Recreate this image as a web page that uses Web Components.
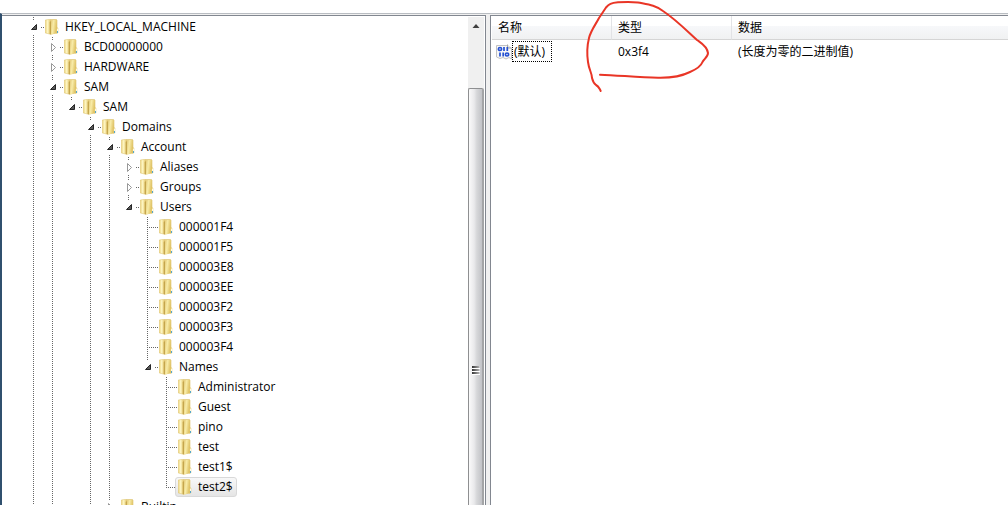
<!DOCTYPE html>
<html lang="zh-CN">
<head>
<meta charset="utf-8">
<title>注册表编辑器</title>
<style>
  html, body { height: 100%; margin: 0; background: #fff; }
  body { font: 12px/20px "Open Sans", "Noto Sans CJK SC", sans-serif; color: #000; overflow: hidden; }
</style>
</head>
<body>
<registry-window>
  <key-tree slot="tree">
    <key-node label="HKEY_LOCAL_MACHINE" state="open">
      <key-node label="BCD00000000" state="closed"></key-node>
      <key-node label="HARDWARE" state="closed"></key-node>
      <key-node label="SAM" state="open">
        <key-node label="SAM" state="open" last>
          <key-node label="Domains" state="open">
            <key-node label="Account" state="open">
              <key-node label="Aliases" state="closed"></key-node>
              <key-node label="Groups" state="closed"></key-node>
              <key-node label="Users" state="open" last>
                <key-node label="000001F4"></key-node>
                <key-node label="000001F5"></key-node>
                <key-node label="000003E8"></key-node>
                <key-node label="000003EE"></key-node>
                <key-node label="000003F2"></key-node>
                <key-node label="000003F3"></key-node>
                <key-node label="000003F4"></key-node>
                <key-node label="Names" state="open" last>
                  <key-node label="Administrator"></key-node>
                  <key-node label="Guest"></key-node>
                  <key-node label="pino"></key-node>
                  <key-node label="test"></key-node>
                  <key-node label="test1$"></key-node>
                  <key-node label="test2$" selected last></key-node>
                </key-node>
              </key-node>
            </key-node>
            <key-node label="Builtin" state="closed" last></key-node>
          </key-node>
        </key-node>
      </key-node>
    </key-node>
  </key-tree>
  <value-list slot="values"></value-list>
  <ink-mark slot="ink"></ink-mark>
</registry-window>

<script>
class ShadowElement extends HTMLElement {
  constructor() {
    super();
    this.attachShadow({ mode: "open" }).innerHTML = this.constructor.markup;
  }
}

customElements.define("registry-window", class extends ShadowElement {
  static markup = `
    <style>
      :host { display: flex; flex-direction: column; height: 100vh; padding-top: 13px; box-sizing: border-box; overflow: hidden; position: relative; }
      .frame { flex: 1; min-height: 0; display: grid; grid-template-columns: minmax(0, 242fr) 4px minmax(0, 259fr);
        padding-top: 1px; background: #f0f0f0; border-top: 1px solid #b9bdc2; border-left: 2px solid #30506e; }
      .pane { min-width: 0; min-height: 0; overflow: hidden; background: #fff; border-top: 1px solid #828790; }
      .left { border-right: 1px solid #828790; }
      .right { border-left: 1px solid #828790; }
    </style>
    <div class="frame">
      <div class="pane left"><slot name="tree"></slot></div>
      <div></div>
      <div class="pane right"><slot name="values"></slot></div>
    </div>
    <slot name="ink"></slot>`;
});

customElements.define("key-tree", class extends ShadowElement {
  static markup = `
    <style>
      :host { display: flex; height: 100%; }
      .keys { flex: 1; min-width: 0; overflow: hidden; padding: 1px 0 0 27px; }
    </style>
    <div class="keys" role="tree"><slot></slot></div>
    <scroll-bar></scroll-bar>`;
});

customElements.define("scroll-bar", class extends ShadowElement {
  static markup = `
    <style>
      :host { display: flex; flex-direction: column; width: 16px; margin: 1px 1px 0 0; background: #f0f0f0; }
      button { all: unset; display: grid; place-items: center; height: 17px; }
      .track { height: 54px; }
      .thumb { flex: 1; display: flex; flex-direction: column; align-items: center; justify-content: flex-start;
        border: 1px solid #8e8f91; border-bottom: 0; border-right: 2px solid #a3a4a6; border-radius: 2px 2px 0 0;
        background: linear-gradient(90deg, #fafafa 0, #e9e9eb 40%, #d6d7d9 60%, #c2c3c7 100%); }
      .grip { margin-top: 277px; }
      svg { display: block; }
    </style>
    <button aria-label="向上滚动"><svg width="8" height="4" viewBox="0 0 8 4"><path d="M0.500 4 4 0 7.500 4z" fill="#404040"/></svg></button>
    <div class="track"></div>
    <div class="thumb"><svg class="grip" width="8" height="10" viewBox="0 0 8 10">
      <defs><linearGradient id="g"><stop stop-color="#333"/><stop offset="1" stop-color="#aaa"/></linearGradient></defs>
      <path d="M0 2h8v1H0zM0 5h8v1H0zM0 8h8v1H0z" fill="#fff"/>
      <path d="M0 0h7v2H0zM0 3h7v2H0zM0 6h7v2H0z" fill="url(#g)"/></svg></div>`;
});

customElements.define("folder-icon", class extends ShadowElement {
  static markup = `
    <style>:host { display: block; width: 14px; height: 16px; flex: none; } svg { display: block; }</style>
    <svg width="14" height="16" viewBox="0 0 14 16" aria-hidden="true">
      <defs>
        <linearGradient id="a"><stop stop-color="#ecd47c"/><stop offset=".45" stop-color="#fdf5c2"/><stop offset="1" stop-color="#e8cf78"/></linearGradient>
        <linearGradient id="b" x2="1" y2=".3"><stop stop-color="#e4ca78"/><stop offset=".45" stop-color="#f8eca8"/><stop offset="1" stop-color="#dfc264"/></linearGradient>
      </defs>
      <path d="M5 .5h6.500l.5.500v13L6 15z" fill="#ead385" stroke="#dcc370" stroke-width=".6"/>
      <path d="M.3 1 4.500.3l.8.700v14.200L.3 14z" fill="url(#a)" stroke="#dcc36e" stroke-width=".5"/>
      <path d="M4.700 3 6 2v13.700l-1.300-.6z" fill="#c5a64c"/>
      <path d="M6 2.500 8 1h3.800v12.800L6 15.700z" fill="url(#b)"/>
      <path d="M11.300 8 13.200 9v5l-1.900.7z" fill="#e0c262"/>
      <path d="M11.900 9.500h1.100V12h-1.100z" fill="#fffbe2"/><path d="M12 12h1v2h-1z" fill="#54a6cf"/>
    </svg>`;
});

customElements.define("key-node", class extends ShadowElement {
  static markup = `
    <style>
      :host { display: block; background: repeating-linear-gradient(#666 0 1px, transparent 1px 2px) 4px 0 / 1px 100% no-repeat; }
      :host([last]) { background-size: 1px 11px; }
      .row { display: flex; height: 20px; position: relative; padding-left: 13px; white-space: nowrap;
        background: repeating-linear-gradient(90deg, #666 0 1px, transparent 1px 2px) 4px 10px / 12px 1px no-repeat; }
      .label { display: flex; align-items: center; gap: 6px; box-sizing: border-box; height: 20px; padding: 0 3px 0 2px; border: 1px solid transparent; border-radius: 3px; }
      .label span { line-height: 18px; }
      :host([selected]) .label { background: linear-gradient(#f8f8f8, #e5e5e5); border-color: #d9d9d9; }
      button { all: unset; display: none; position: absolute; left: 0; top: 3px; width: 11px; height: 14px; background: #fff; }
      :host([state]) button { display: block; }
      svg { display: block; }
      .open, .shut { display: none; }
      :host([state="open"]) .open, :host([state="closed"]) .shut { display: block; }
      .children { padding-left: 19px; }
      :host([state="closed"]) .children { display: none; }
    </style>
    <div class="row" role="treeitem">
      <button aria-label="展开或折叠"><svg width="11" height="14" viewBox="0 0 11 14">
        <path class="open" d="M7.500 4.500v5h-5z" fill="#595959" stroke="#262626"/>
        <path class="shut" d="M3.500 3.500 7.500 7.500 3.500 11.500z" fill="#fff" stroke="#989898"/>
      </svg></button>
      <div class="label"><folder-icon></folder-icon><span></span></div>
    </div>
    <div class="children" role="group"><slot></slot></div>`;
  connectedCallback() {
    this.shadowRoot.querySelector("span").textContent = this.getAttribute("label");
    this.shadowRoot.querySelector("button").onclick = () =>
      this.setAttribute("state", this.getAttribute("state") === "open" ? "closed" : "open");
  }
});

customElements.define("binary-icon", class extends ShadowElement {
  static markup = `
    <style>:host { display: block; width: 16px; height: 16px; flex: none; } svg { display: block; }</style>
    <svg width="16" height="16" viewBox="0 0 16 16" fill="none" aria-hidden="true">
      <path d="M.5 1.500H11.500L15.500 4.500V15L13 13.500 10 15 7 13.500 4 14.500.5 13z" fill="#f7f7f7" stroke="#c2c2c2"/>
      <path d="M11.500.5v3.500h4" fill="#e4e4e4" stroke="#a5a5a5"/>
      <g stroke="#2450d2" stroke-width="1.700"><ellipse cx="4" cy="5" rx="1.600" ry="1.500"/><path d="M8 3v4M11.300 3v4M4 8.500v4M7.200 8.500v4"/><ellipse cx="11" cy="10.500" rx="1.600" ry="1.500"/></g>
    </svg>`;
});

customElements.define("value-list", class extends ShadowElement {
  static markup = `
    <style>
      :host { display: block; padding-left: 1px; }
      table { width: 100%; table-layout: fixed; border-collapse: separate; border-spacing: 0; }
      col { width: 120px; } col:last-child { width: auto; }
      th { box-sizing: border-box; height: 24px; padding: 0 0 0 6px; font-weight: 400; text-align: left; line-height: 23px;
        border-bottom: 1px solid #d5d5d5; background: linear-gradient(#fff 0 10px, #f7f8fa 10px, #f0f1f2 23px); }
      th:not(:last-child) { border-right: 1px solid #e2e3e6; }
      td { padding: 1px 0 0 6px; white-space: nowrap; line-height: 21px; }
      td:first-child { padding-left: 4px; }
      .name { display: flex; align-items: center; }
      .focus { box-sizing: border-box; height: 21px; line-height: 19px; padding: 0 6px 0 1px; border: 1px dotted #000; }
    </style>
    <table>
      <colgroup><col><col><col></colgroup>
      <thead><tr><th scope="col">名称</th><th scope="col">类型</th><th scope="col">数据</th></tr></thead>
      <tbody><tr>
        <td><div class="name"><binary-icon></binary-icon><span class="focus">(默认)</span></div></td>
        <td>0x3f4</td><td>(长度为零的二进制值)</td>
      </tr></tbody>
    </table>`;
});

customElements.define("ink-mark", class extends ShadowElement {
  static markup = `
    <style>:host { position: absolute; left: 584px; top: 0; pointer-events: none; } svg { display: block; }</style>
    <svg width="128" height="96" viewBox="584 0 128 96" aria-hidden="true">
      <path d="M600 74.700C620 75.500 640 77.500 658 77.700 672 78 682 76 690 72 697 69 701 66 702.500 62 704 59 708 57 708 53 707 46 701 43 697 40 684 28 675 19 663 11 655 5 648 4.500 638 2.500 631 1.700 624 2 618 2.300 611 3 609 4 606 7.500L599 18C596 24 591 30 589 38 587 46 587 55 588 62 589 70 592 73 592 78 593 82 594 83.500 596 85 599 86.500 599 88 600.700 91"
        fill="none" stroke="#e93526" stroke-width="2" stroke-linecap="round" stroke-linejoin="round"/>
    </svg>`;
});
</script>
</body>
</html>
